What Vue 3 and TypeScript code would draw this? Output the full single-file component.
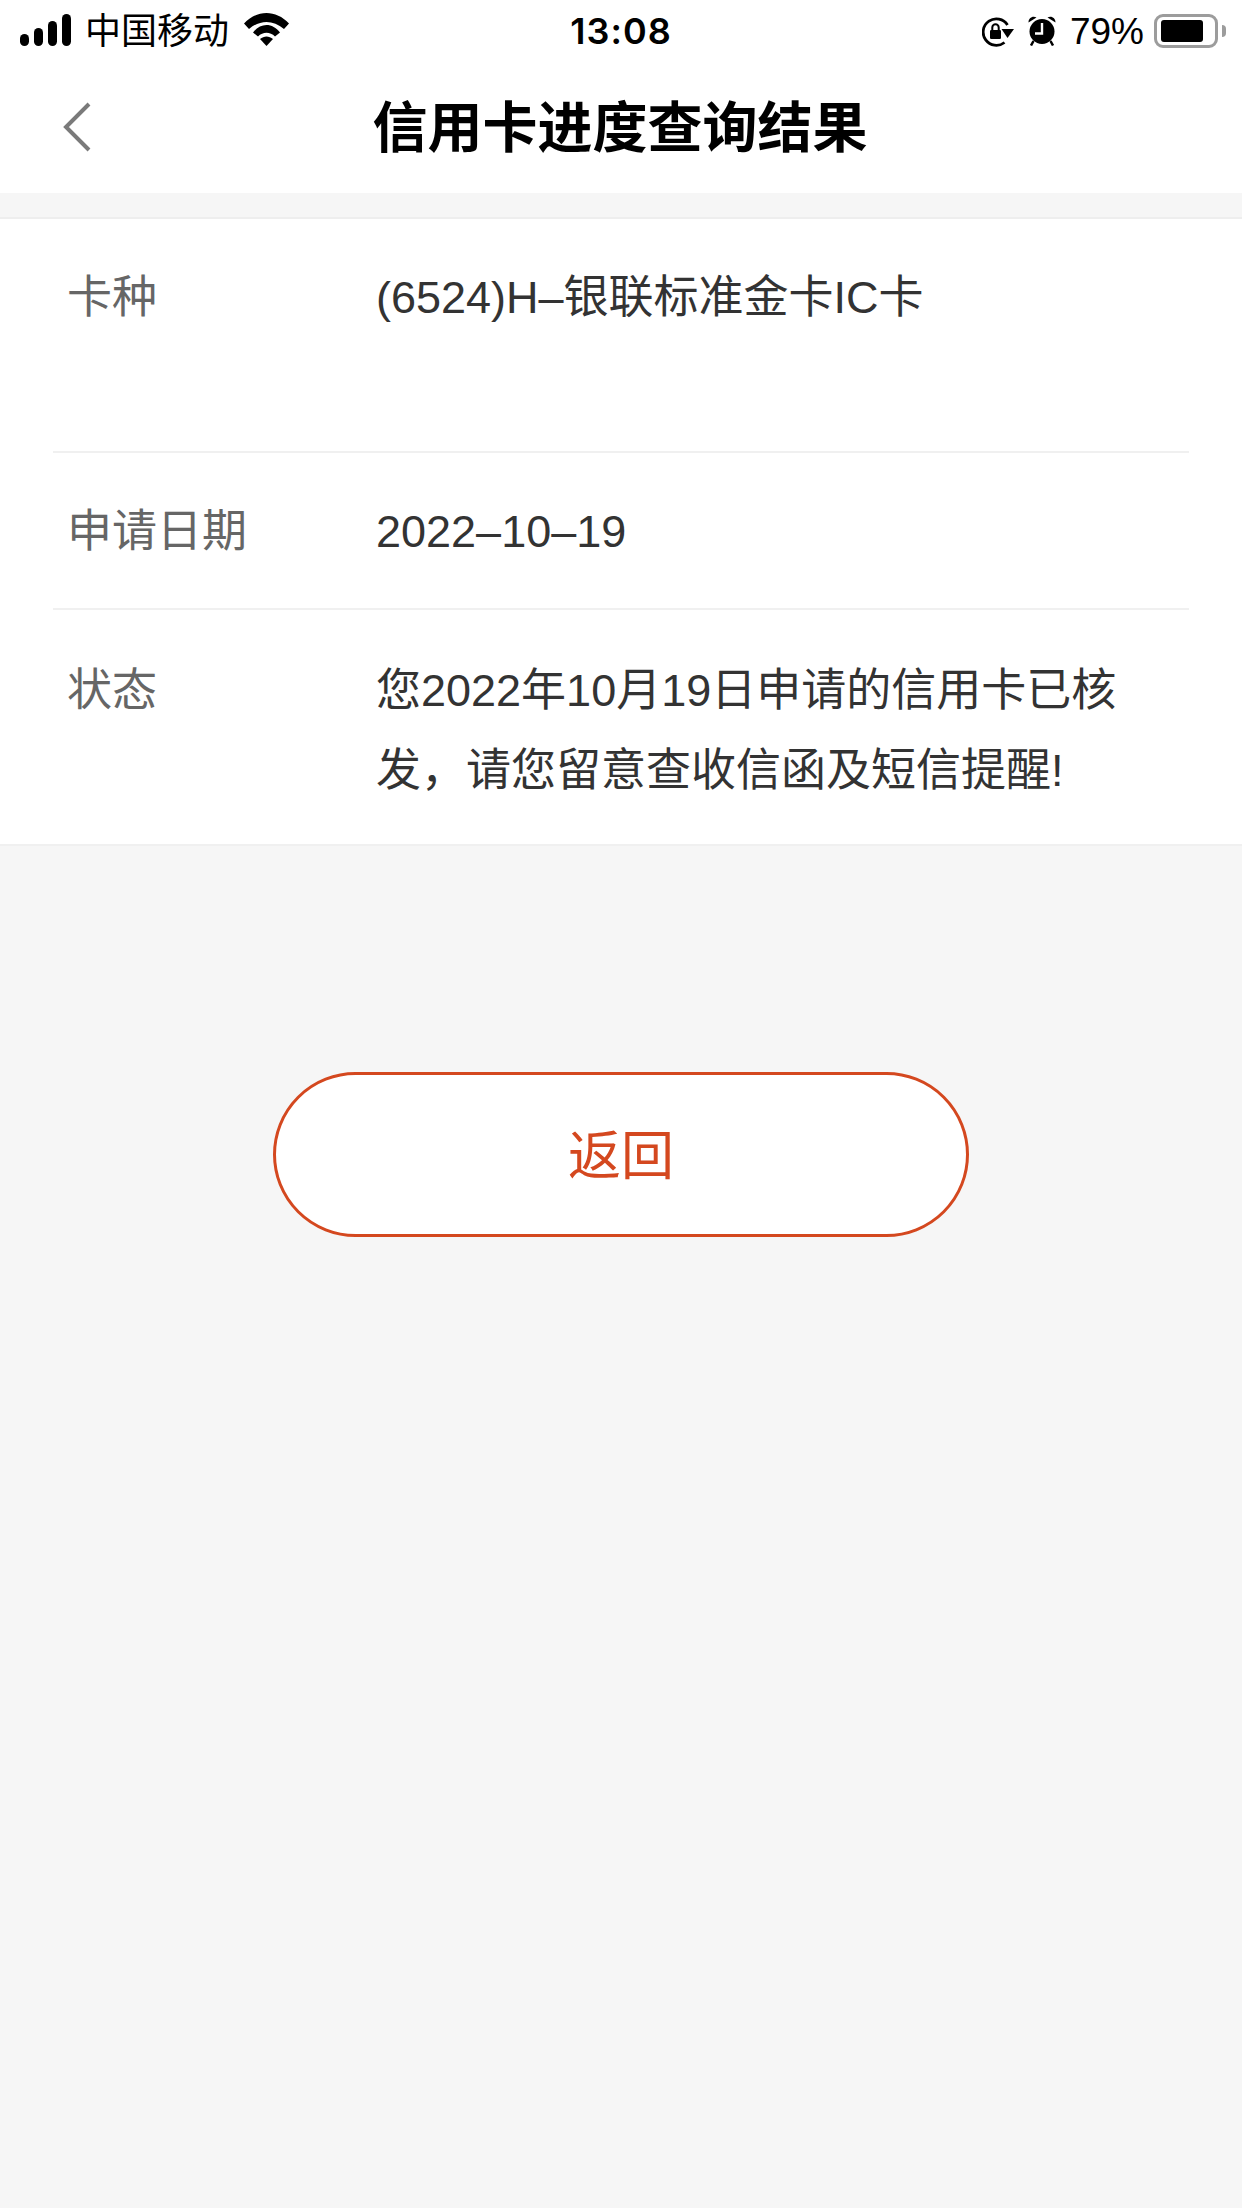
<script setup lang="ts">
interface InfoRow {
  key: string
  label: string
  lines: string[]
}

const rows: InfoRow[] = [
  { key: 'card', label: '卡种', lines: ['(6524)H–银联标准金卡IC卡'] },
  { key: 'date', label: '申请日期', lines: ['2022–10–19'] },
  { key: 'state', label: '状态', lines: ['您2022年10月19日申请的信用卡已核', '发，请您留意查收信函及短信提醒!'] }
]

const signalBars = [12, 18, 25, 32]
</script>

<template>
  <div class="page">
    <div class="status-bar">
      <div class="status-left">
        <div class="signal">
          <i v-for="h in signalBars" :key="h" :style="{ height: h + 'px' }"></i>
        </div>
        <span class="carrier">中国移动</span>
        <svg class="wifi" width="45" height="33" viewBox="0 0 45 33">
          <path d="M0 10.500C13-3.500 32-3.500 45 10.500L40 16C29 6.500 16 6.500 5 16Z" fill="#000" />
          <path d="M9 19.500C16.500 9.500 28.500 9.500 36 19.500L31 23.500C26 18.500 19 18.500 14 23.500Z" fill="#000" />
          <path d="M16 26C20 22.500 25 22.500 29 26L22.500 33Z" fill="#000" />
        </svg>
      </div>
      <span class="clock">13:08</span>
      <div class="status-right">
        <svg class="lock" width="32" height="30" viewBox="0 0 32 30">
          <path d="M22.500 25.500A13.200 13.200 0 1 1 25.500 8" fill="none" stroke="#000" stroke-width="2.800" />
          <path d="M19.500 12H32L25.500 21Z" fill="#000" />
          <rect x="8" y="13" width="11" height="9" rx="1.200" fill="#000" />
          <path d="M10.300 13V10.500a3.200 3.200 0 0 1 6.400 0V13" fill="none" stroke="#000" stroke-width="2" />
        </svg>
        <svg class="alarm" width="28" height="30" viewBox="0 0 28 30">
          <circle cx="14" cy="15.500" r="12.500" fill="#000" />
          <path d="M0.500 6.500C0.500 2 4.500-0.500 8.500 1.500Z M27.500 6.500C27.500 2 23.500-0.500 19.500 1.500Z" fill="#000" />
          <path d="M5.500 25L3 29.500M22.500 25L25 29.500" stroke="#000" stroke-width="2.500" />
          <path d="M14 7V17.500H7" fill="none" stroke="#fff" stroke-width="2.400" />
        </svg>
        <span class="percent">79%</span>
        <div class="battery">
          <div class="battery-level"></div>
        </div>
        <div class="battery-tip"></div>
      </div>
    </div>

    <div class="nav-bar">
      <svg class="back" width="28" height="50" viewBox="0 0 28 50">
        <path d="M26 2L3 25L26 48" fill="none" stroke="#7a7a7a" stroke-width="4" />
      </svg>
      <span class="nav-title">信用卡进度查询结果</span>
    </div>

    <div class="info-card">
      <div v-for="row in rows" :key="row.key" class="info-row" :class="row.key">
        <span class="info-label">{{ row.label }}</span>
        <div class="info-value">
          <div v-for="line in row.lines" :key="line">{{ line }}</div>
        </div>
      </div>
    </div>

    <button class="back-btn" type="button"><span>返回</span></button>
  </div>
</template>

<style>
html,
body {
  margin: 0;
  background: #f6f6f6;
}
</style>

<style scoped>
.page {
  width: 1242px;
  height: 2208px;
  overflow: hidden;
  background: #f6f6f6;
  font-family: "Liberation Sans", "Noto Sans CJK SC", sans-serif;
}

.status-bar {
  height: 62px;
  background: #fff;
  display: grid;
  grid-template-columns: 1fr auto 1fr;
  align-items: center;
  color: #000;
}

.status-left {
  display: flex;
  align-items: center;
  padding-left: 20px;
}

.signal {
  display: flex;
  align-items: flex-end;
  gap: 5px;
  height: 32px;
  margin-top: -2px;
}

.signal i {
  display: block;
  width: 9px;
  border-radius: 4.500px;
  background: #000;
}

.carrier {
  margin-left: 14px;
  font-size: 36px;
  line-height: 44px;
  margin-top: 2px;
}

.wifi {
  margin-left: 15px;
  margin-top: -3px;
}

.clock {
  font-size: 36px;
  letter-spacing: 1px;
  font-family: "Inter", "Liberation Sans", sans-serif;
  font-weight: 600;
  margin-top: -1px;
}

.status-right {
  display: flex;
  align-items: center;
  justify-content: flex-end;
  padding-right: 16px;
}

.lock {
  margin-top: 1px;
}

.alarm {
  margin-left: 14px;
}

.percent {
  margin-left: 14px;
  font-size: 37px;
  line-height: 44px;
  margin-top: 1px;
}

.battery {
  margin-left: 10px;
  width: 64px;
  height: 34px;
  box-sizing: border-box;
  border: 3px solid #9c9c9c;
  border-radius: 9px;
  padding: 3px 4px;
}

.battery-level {
  width: 42px;
  height: 100%;
  background: #000;
  border-radius: 3px;
}

.battery-tip {
  width: 4px;
  height: 12px;
  margin-left: 4px;
  background: #9c9c9c;
  border-radius: 0 4px 4px 0;
}

.nav-bar {
  height: 131px;
  position: relative;
  display: flex;
  align-items: center;
  justify-content: center;
  background: #fff;
}

.back {
  position: absolute;
  left: 63px;
  top: 40px;
}

.nav-title {
  font-size: 55px;
  font-weight: 700;
  color: #000;
  margin-top: -10px;
  margin-left: -2px;
}

.info-card {
  margin-top: 24px;
  padding: 0 53px;
  background: #fff;
  border-top: 2px solid #eeeeee;
  border-bottom: 2px solid #f0f0f0;
}

.info-row {
  display: flex;
  box-sizing: border-box;
  border-bottom: 2px solid #f0f0f0;
  font-size: 45px;
  line-height: 66px;
}

.info-row.card {
  height: 234px;
  padding-top: 46px;
}

.info-row.date {
  height: 157px;
  padding-top: 46px;
}

.info-row.state {
  height: 234px;
  padding-top: 48px;
  border-bottom: none;
}

.info-label {
  width: 323px;
  flex-shrink: 0;
  padding-left: 14px;
  box-sizing: border-box;
  color: #666;
}

.info-value {
  color: #333;
  line-height: 80px;
  margin-top: -7px;
}

.back-btn {
  display: flex;
  align-items: center;
  justify-content: center;
  width: 696px;
  height: 165px;
  margin: 226px 0 0 273px;
  padding: 0 0 6px;
  background: #fff;
  border: 3px solid #d4481f;
  border-radius: 83px;
  color: #d4481f;
  font-family: inherit;
  font-size: 53px;
}
</style>
